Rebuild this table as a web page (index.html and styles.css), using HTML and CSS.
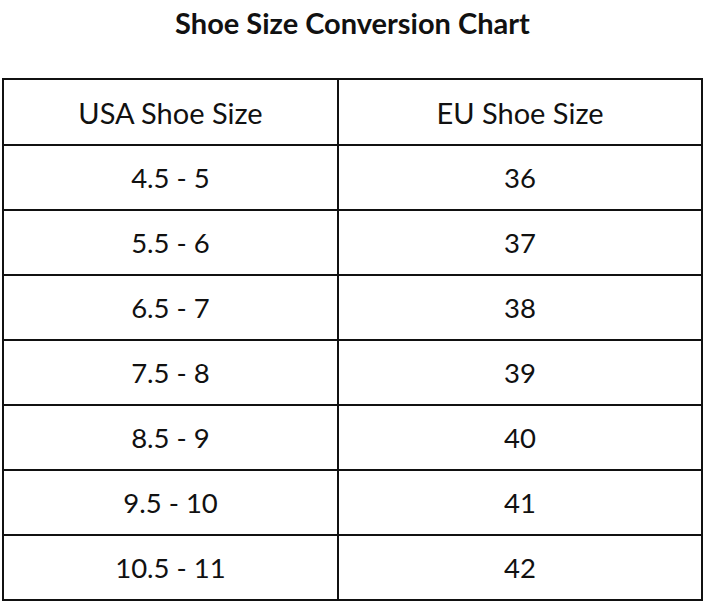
FILE: index.html
```html
<!DOCTYPE html>
<html lang="en">
<head>
<meta charset="utf-8">
<title>Shoe Size Conversion Chart</title>
<link rel="stylesheet" href="styles.css">
</head>
<body>
<div class="page">
  <h1 class="title">Shoe Size Conversion Chart</h1>
  <table class="chart">
    <thead>
      <tr><th class="col-us">USA Shoe Size</th><th class="col-eu">EU Shoe Size</th></tr>
    </thead>
    <tbody>
      <tr><td>4.5 - 5</td><td>36</td></tr>
      <tr><td>5.5 - 6</td><td>37</td></tr>
      <tr><td>6.5 - 7</td><td>38</td></tr>
      <tr><td>7.5 - 8</td><td>39</td></tr>
      <tr><td>8.5 - 9</td><td>40</td></tr>
      <tr><td>9.5 - 10</td><td>41</td></tr>
      <tr><td>10.5 - 11</td><td>42</td></tr>
    </tbody>
  </table>
</div>
</body>
</html>
```
FILE: styles.css
```css
html, body {
  margin: 0;
  padding: 0;
  background: #ffffff;
}
body {
  font-family: Lato, "Noto Sans", sans-serif;
  color: #111111;
}
.page {
  padding: 0 3px 0 2px;
}
.title {
  margin: 0;
  height: 78px;
  padding-top: 4px;
  box-sizing: border-box;
  text-align: center;
  font-size: 29px;
  font-weight: 700;
  line-height: 38px;
  color: #111111;
}
.chart {
  width: 701px;
  border-collapse: separate;
  border-spacing: 0;
  border-top: 2px solid #111;
  border-left: 2px solid #111;
  table-layout: fixed;
}
.chart th,
.chart td {
  border-right: 2px solid #111;
  border-bottom: 2px solid #111;
  padding: 0;
  text-align: center;
  font-weight: 400;
  color: #111;
}
.chart th {
  height: 64px;
  font-size: 29px;
}
.chart td {
  height: 63px;
  font-size: 27.5px;
}
.col-us {
  width: 333px;
}
.col-eu {
  width: 362px;
}
```
